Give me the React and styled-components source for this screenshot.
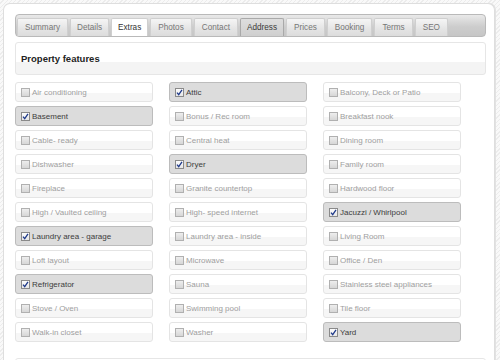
import React from "react";
import styled, { createGlobalStyle } from "styled-components";

const GlobalStyle = createGlobalStyle`
  html, body {
    margin: 0;
    padding: 0;
  }
  body {
    font-family: "Liberation Sans", Arial, sans-serif;
    background-color: #f7f7f7;
    background-image: repeating-linear-gradient(
      135deg,
      #f9f9f9 0px,
      #f9f9f9 2px,
      #ececec 2px,
      #ececec 3px
    );
    height: 360px;
    overflow: hidden;
  }
`;

const Page = styled.div`
  padding: 3px 5px 0 3px;
`;

const Panel = styled.div`
  box-sizing: border-box;
  background: #fff;
  border: 1px solid #dedede;
  border-bottom: none;
  border-radius: 7px 7px 0 0;
  box-shadow: 1px 0 0 #e2e2e2;
  padding: 10px 8px 0 11px;
  height: 357px;
  overflow: hidden;
`;

const TabBar = styled.div`
  display: flex;
  align-items: flex-end;
  gap: 2px;
  height: 19px;
  padding: 2px 0 0 1px;
  border: 1px solid #b9b9b9;
  border-radius: 4px;
  background: linear-gradient(#e9e9e9, #cdcdcd 55%, #c6c6c6);
`;

const Tab = styled.div`
  height: 17px;
  padding: 0 ${(p) => p.$pad}px;
  display: flex;
  align-items: center;
  font-size: 8.2px;
  color: ${(p) => (p.$active ? "#333" : p.$dark ? "#3a3a3a" : "#767676")};
  border: 1px solid ${(p) => (p.$dark ? "#a9a9a9" : "#cfcfcf")};
  border-bottom: none;
  border-radius: 2px 2px 0 0;
  background: ${(p) =>
    p.$active
      ? "#fff"
      : p.$dark
      ? "linear-gradient(#dedede, #cfcfcf)"
      : "linear-gradient(#f5f5f5, #e4e4e4 60%, #dcdcdc)"};
`;

const Header = styled.div`
  margin-top: 5px;
  height: 31px;
  border: 1px solid #e6e6e6;
  border-radius: 3px;
  background: linear-gradient(#fff 60%, #f4f4f4 60%);
  display: flex;
  align-items: center;
  padding-left: 5px;
  font-size: 9.5px;
  font-weight: bold;
  color: #222;
`;

const Grid = styled.div`
  display: grid;
  grid-template-columns: repeat(3, 138px);
  column-gap: 16px;
  row-gap: 4px;
  margin-top: 7px;
`;

const Item = styled.label`
  box-sizing: border-box;
  height: 20px;
  display: flex;
  align-items: center;
  gap: 2px;
  padding-left: 5px;
  border: 1px solid ${(p) => (p.$checked ? "#bcbcbc" : "#e4e4e4")};
  border-radius: 3px;
  background: ${(p) =>
    p.$checked ? "#dcdcdc" : "linear-gradient(#fff 55%, #f6f6f6 55%)"};
  font-size: 8px;
  color: ${(p) => (p.$checked ? "#3d3d3d" : "#9e9e9e")};
  white-space: nowrap;
`;

const Box = styled.span`
  box-sizing: border-box;
  width: 9px;
  height: 9px;
  flex: none;
  border: 1px solid ${(p) => (p.$checked ? "#8a8a8a" : "#b0b0b0")};
  background: ${(p) =>
    p.$checked ? "linear-gradient(#fdfdfd, #e6e6e6)" : "linear-gradient(#eee, #d6d6d6)"};
  display: flex;
  align-items: center;
  justify-content: center;
`;

const Footer = styled.div`
  margin-top: 16px;
  height: 20px;
  border: 1px solid #e6e6e6;
  border-radius: 3px;
`;

const tabs = [
  ["Summary", 7],
  ["Details", 6],
  ["Extras", 6, "active"],
  ["Photos", 7],
  ["Contact", 7],
  ["Address", 6, "dark"],
  ["Prices", 7],
  ["Booking", 7],
  ["Terms", 7],
  ["SEO", 7],
];

const features = [
  ["Air conditioning", false],
  ["Attic", true],
  ["Balcony, Deck or Patio", false],
  ["Basement", true],
  ["Bonus / Rec room", false],
  ["Breakfast nook", false],
  ["Cable- ready", false],
  ["Central heat", false],
  ["Dining room", false],
  ["Dishwasher", false],
  ["Dryer", true],
  ["Family room", false],
  ["Fireplace", false],
  ["Granite countertop", false],
  ["Hardwood floor", false],
  ["High / Vaulted ceiling", false],
  ["High- speed internet", false],
  ["Jacuzzi / Whirlpool", true],
  ["Laundry area - garage", true],
  ["Laundry area - inside", false],
  ["Living Room", false],
  ["Loft layout", false],
  ["Microwave", false],
  ["Office / Den", false],
  ["Refrigerator", true],
  ["Sauna", false],
  ["Stainless steel appliances", false],
  ["Stove / Oven", false],
  ["Swimming pool", false],
  ["Tile floor", false],
  ["Walk-in closet", false],
  ["Washer", false],
  ["Yard", true],
];

const Check = ({ checked }) => (
  <Box $checked={checked}>
    {checked && (
      <svg width="7" height="7" viewBox="0 0 7 7">
        <path d="M1 3.6 L2.7 5.6 L6 0.8" fill="none" stroke="#1f3a8a" strokeWidth="1.3" />
      </svg>
    )}
  </Box>
);

const App = () => {
  return (
    <>
      <GlobalStyle />
      <Page>
        <Panel>
          <TabBar>
            {tabs.map(([name, pad, kind]) => (
              <Tab key={name} $pad={pad} $active={kind === "active"} $dark={kind === "dark"}>
                {name}
              </Tab>
            ))}
          </TabBar>
          <Header>Property features</Header>
          <Grid>
            {features.map(([name, checked]) => (
              <Item key={name} $checked={checked}>
                <Check checked={checked} />
                {name}
              </Item>
            ))}
          </Grid>
          <Footer />
        </Panel>
      </Page>
    </>
  );
};

export default App;
